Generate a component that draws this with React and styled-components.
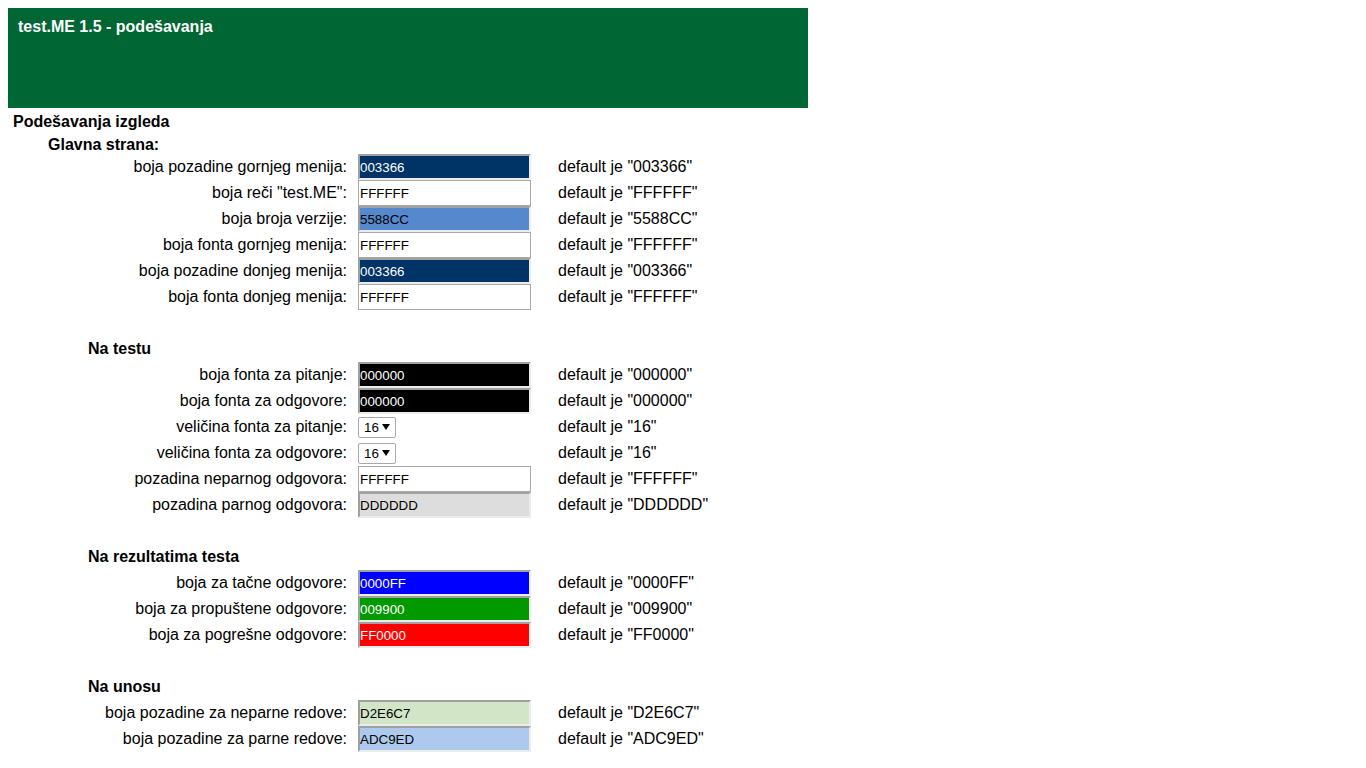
import styled, { createGlobalStyle } from "styled-components";

const GlobalStyle = createGlobalStyle`
  body {
    margin: 8px;
    font-family: "Liberation Sans", Arial, sans-serif;
    font-size: 16px;
    color: #000;
    background: #fff;
  }
`;

const Header = styled.div`
  width: 800px;
  height: 100px;
  box-sizing: border-box;
  padding: 10px;
  background: #006633;
  h1 {
    margin: 0;
    font-size: 16px;
    line-height: 18px;
    font-weight: bold;
    color: #fff;
  }
`;

const Form = styled.form`
  padding: 1px 0 432px;
`;

const PageHeading = styled.div`
  height: 26px;
  line-height: 26px;
  padding-left: 5px;
  font-weight: bold;
`;

const SectionHeading = styled.div`
  height: ${({ $h }) => $h}px;
  line-height: ${({ $h }) => $h}px;
  padding-left: ${({ $indent }) => $indent}px;
  font-weight: bold;
`;

const Section = styled.div`
  & + & {
    margin-top: 26px;
  }
`;

const Rows = styled.div`
  display: grid;
  grid-template-columns: 350px 200px 1fr;
  grid-auto-rows: 26px;
  align-items: center;
`;

const Label = styled.label`
  text-align: right;
  padding-right: 11px;
  white-space: nowrap;
`;

const ColorInput = styled.input`
  width: 173px;
  height: 26px;
  box-sizing: border-box;
  margin: 0;
  font-family: "Liberation Sans", Arial, sans-serif;
  font-size: 13.333px;
  outline: none;
  background: #${({ $bg }) => $bg};
  color: ${({ $light }) => ($light ? "#000" : "#fff")};
  ${({ $bg }) =>
    $bg === "FFFFFF"
      ? `border: 1px solid #a9a9a9; padding: 1px 2px 0 1px;`
      : `border-style: solid; border-width: 2px;
         border-color: #a0a0a0 #ececec #ececec #a0a0a0;
         padding: 1px 1px 0 0;`}
`;

const SelectBox = styled.span`
  display: inline-flex;
  align-items: center;
  gap: 3px;
  width: 38px;
  height: 21px;
  box-sizing: border-box;
  padding: 0 0 0 5px;
  border: 1px solid #a9a9a9;
  border-radius: 2px;
  background: #fff;
  select {
    appearance: none;
    border: none;
    background: transparent;
    padding: 0;
    margin: 0;
    font-family: "Liberation Sans", Arial, sans-serif;
    font-size: 13.333px;
    color: #000;
    outline: none;
    width: 15px;
  }
`;

const Default = styled.span`
  white-space: nowrap;
`;

const sections = [
  {
    title: "Glavna strana:",
    indent: 40,
    h: 19,
    rows: [
      ["boja pozadine gornjeg menija:", "003366"],
      ['boja reči "test.ME":', "FFFFFF", true],
      ["boja broja verzije:", "5588CC", true],
      ["boja fonta gornjeg menija:", "FFFFFF", true],
      ["boja pozadine donjeg menija:", "003366"],
      ["boja fonta donjeg menija:", "FFFFFF", true],
    ],
  },
  {
    title: "Na testu",
    indent: 80,
    h: 26,
    rows: [
      ["boja fonta za pitanje:", "000000"],
      ["boja fonta za odgovore:", "000000"],
      ["veličina fonta za pitanje:", "16", true, "select"],
      ["veličina fonta za odgovore:", "16", true, "select"],
      ["pozadina neparnog odgovora:", "FFFFFF", true],
      ["pozadina parnog odgovora:", "DDDDDD", true],
    ],
  },
  {
    title: "Na rezultatima testa",
    indent: 80,
    h: 26,
    rows: [
      ["boja za tačne odgovore:", "0000FF"],
      ["boja za propuštene odgovore:", "009900"],
      ["boja za pogrešne odgovore:", "FF0000"],
    ],
  },
  {
    title: "Na unosu",
    indent: 80,
    h: 26,
    rows: [
      ["boja pozadine za neparne redove:", "D2E6C7", true],
      ["boja pozadine za parne redove:", "ADC9ED", true],
    ],
  },
];

function FontSelect({ value }) {
  return (
    <SelectBox>
      <select defaultValue={value}>
        {[10, 11, 12, 13, 14, 15, 16, 18, 20, 24].map((n) => (
          <option key={n} value={n}>
            {n}
          </option>
        ))}
      </select>
      <svg width="8" height="6" viewBox="0 0 8 6">
        <path d="M0 0h8L4 6z" fill="#000" />
      </svg>
    </SelectBox>
  );
}

export default function App() {
  return (
    <>
      <GlobalStyle />
      <Header>
        <h1>test.ME 1.5 - podešavanja</h1>
      </Header>
      <Form>
        <PageHeading>Podešavanja izgleda</PageHeading>
        {sections.map((s) => (
          <Section key={s.title}>
            <SectionHeading $indent={s.indent} $h={s.h}>
              {s.title}
            </SectionHeading>
            <Rows>
              {s.rows.map(([label, value, light, kind]) => (
                <>
                  <Label key={label + "l"}>{label}</Label>
                  <div key={label + "i"}>
                    {kind === "select" ? (
                      <FontSelect value={value} />
                    ) : (
                      <ColorInput defaultValue={value} $bg={value} $light={light} />
                    )}
                  </div>
                  <Default key={label + "d"}>default je "{value}"</Default>
                </>
              ))}
            </Rows>
          </Section>
        ))}
      </Form>
    </>
  );
}
